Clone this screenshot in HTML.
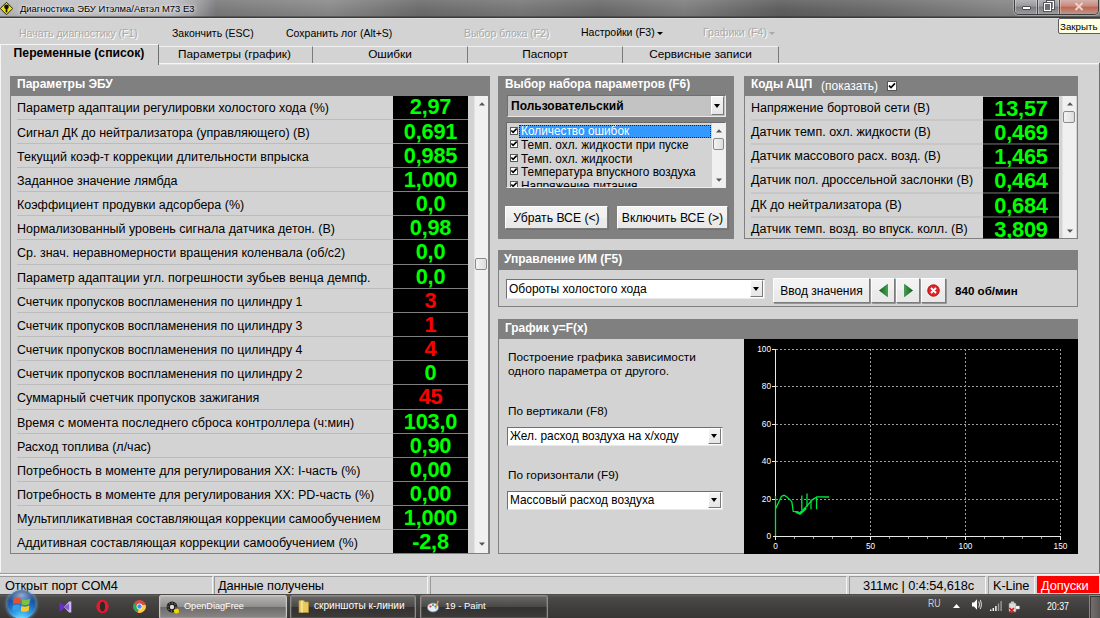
<!DOCTYPE html><html lang="ru"><head><meta charset="utf-8"><title>Диагностика ЭБУ Итэлма/Автэл M73 E3</title><style>*{box-sizing:border-box;margin:0;padding:0}
html,body{width:1100px;height:618px;overflow:hidden;background:#d3d3d3}
body{font-family:"Liberation Sans",sans-serif;color:#000}
#scr{position:absolute;left:0;top:0;width:1100px;height:618px;overflow:hidden;background:#d3d3d3}
.abs{position:absolute}
/* title bar */
#tb{position:absolute;left:0;top:0;width:1100px;height:18px;background:linear-gradient(90deg,#b6b6ba 0,#c4c4c8 60px,#bebec2 172px,#a0a0a3 196px,#7a7a7b 216px,#808080 260px,#8a8a8a 330px,#6c6c6c 420px,#787878 520px,#6a6a6a 600px,#7e7e7e 685px,#5e5e5e 780px,#6c6c6c 880px,#848484 1000px,#8a8a8a 1100px);border-bottom:1px solid #3c3c3c;box-shadow:inset 0 -1px 0 rgba(40,40,40,.45)}
#tb .shade{position:absolute;left:0;top:0;width:100%;height:16px;background:linear-gradient(180deg,rgba(255,255,255,.10),rgba(255,255,255,0) 60%,rgba(0,0,0,.06))}
#tb .ttl{position:absolute;left:20px;top:3px;font-size:9.42px;line-height:12px;color:#000;white-space:nowrap;text-shadow:0 0 5px rgba(255,255,255,.9),0 0 3px rgba(255,255,255,.8)}
#tbline{position:absolute;left:0;top:18px;width:1100px;height:1px;background:#dcdcdc}
/* menu */
.mi{position:absolute;top:27px;font-size:10.5px;line-height:12px;white-space:nowrap;color:#000}
.mi.dis{color:#a9a9a9;text-shadow:1px 1px 0 #fff}
.arr{display:inline-block;width:0;height:0;border-left:3px solid transparent;border-right:3px solid transparent;border-top:3px solid #000;vertical-align:middle;margin-left:2px}
.dis .arr{border-top-color:#a9a9a9}
/* tabs */
.tab{position:absolute;top:46px;height:17px;font-size:11.8px;line-height:14px;text-align:center;white-space:nowrap;border-right:1px solid #7a7a7a;border-top:1px solid #f0f0f0}
.tab.sel{top:44px;height:21px;font-weight:bold;font-size:12.2px;line-height:16px;border-right:1px solid #6e6e6e;border-top:1px solid #f4f4f4;border-left:1px solid #f4f4f4;background:#d3d3d3}
#tabline{position:absolute;left:159px;top:63px;width:940px;height:2px;background:linear-gradient(#f6f6f6 50%,#e0e0e0 50%)}
#tabR{position:absolute;left:1099px;top:63px;width:1px;height:510px;background:#6e6e6e}
#tabL{position:absolute;left:0;top:65px;width:1px;height:507px;background:#f6f6f6}
/* panels */
.panel{position:absolute;background:#d3d3d3;border:1px solid #808080}
.ph{position:absolute;left:-1px;top:-1px;right:-1px;height:21px;background:#808080;color:#fff;font-weight:bold;font-size:12px;line-height:18px;padding-left:7px;white-space:nowrap}
.rows{position:absolute;left:0;top:20px}
.row{position:relative;height:24px}
.row .lb{position:absolute;left:6px;top:0;bottom:0;line-height:24px;font-size:12.5px;white-space:nowrap;border-bottom:1px solid #bcbcbc}
.row .vl{position:absolute;top:0;bottom:0;background:#000;text-align:center;font-weight:bold;font-size:21.8px;letter-spacing:-.25px;line-height:24px;border-bottom:1px solid #808080;overflow:hidden}
.g{color:#00ff00}.r{color:#ff0000}
#pL{left:10px;top:76px;width:480px;height:478px;border-right-width:2px}
#pL .ph{height:20px;padding-left:7px;line-height:17px}
#pL .rows{top:19px}
#pL .lb{width:376px;padding-top:1px}
#pL .vl{left:382px;width:75px}
#pL .rows{width:477px;height:457px;overflow:hidden}
#pA{left:744px;top:76px;width:334px;height:163px}
#pA .lb{width:233px;line-height:23px}
#pA .vl{left:238px;width:76px}
#pA .rows{top:19px;height:142px;overflow:hidden;width:332px;transform:translateY(.5px)}
/* middle panel */
#pS{left:498px;top:76px;width:236px;height:163px;background:#808080}
.combo{position:absolute;background:#fff;border:1px solid #707070;border-right-color:#e8e8e8;border-bottom-color:#e8e8e8;font-size:12px;white-space:nowrap;overflow:hidden}
.combo .tx{position:absolute;left:3px;top:0}
.combo .dd{position:absolute;right:1px;top:0;bottom:1px;width:13px;background:linear-gradient(#f4f4f4,#e6e6e6);border:1px solid #7a7a7a;border-left-color:#fff;border-top-color:#fff}
.combo .dd:after{content:"";position:absolute;left:2px;top:50%;margin-top:-2px;border-left:3.5px solid transparent;border-right:3.5px solid transparent;border-top:4px solid #000}
.lbx{position:absolute;background:#d3d3d3;border:1px solid #6a6a6a;border-right-color:#eee;border-bottom-color:#eee;overflow:hidden}
.li{position:absolute;left:0;height:14px;font-size:11.85px;line-height:14px;white-space:nowrap}
.cb{display:inline-block;width:8px;height:8px;background:#fff;border:1px solid #5a5a5a;position:absolute}
.cb svg{position:absolute;left:-1px;top:-1px}
.btn{position:absolute;background:linear-gradient(#f3f3f3,#f0f0f0 50%,#ebebeb 50%,#e8e8e8);border:1px solid #fdfdfd;border-right-color:#7c7c7c;border-bottom-color:#7c7c7c;border-radius:1px;box-shadow:1px 1px 0 rgba(100,100,100,.55);font-size:12.2px;text-align:center;white-space:nowrap}
#pI{left:498px;top:250px;width:580px;height:57px}
#pG{left:498px;top:319px;width:579px;height:235px;border-right:none}
.t12{position:absolute;font-size:11.8px;line-height:14px;white-space:nowrap}
/* status */
#st{position:absolute;left:0;top:573px;width:1100px;height:21px;background:#d3d3d3;border-top:1px solid #9c9c9c;box-shadow:inset 0 1px 0 #f6f6f6,inset 0 2px 0 #e6e6e6}
#st .c{position:absolute;top:2px;height:18px;font-size:12.8px;line-height:18px;white-space:nowrap;border-left:1px solid #9a9a9a;border-top:1px solid #9a9a9a;border-right:1px solid #f6f6f6;padding-left:5px;letter-spacing:-.1px}
/* taskbar */
#tk{position:absolute;left:0;top:594px;width:1100px;height:24px;background:linear-gradient(180deg,#62605e 0,#4c4a48 2px,#413f3d 12px,#383634 24px);border-top:1px solid #4e4c4a}
.tbt{position:absolute;top:0;height:24px;border:1px solid #8d8b89;border-radius:2px;background:linear-gradient(#6a6866,#4a4846 50%,#343231 52%,#3d3b3a);color:#fff;font-size:9.6px;line-height:20px;white-space:nowrap;box-shadow:inset 0 0 0 1px rgba(255,255,255,.12)}
.tbt.act{background:linear-gradient(#b5b3b1,#908e8c 50%,#6e6c6a 52%,#8a8886);border-color:#c9c7c5}
.tbt span{position:absolute;left:24px;top:0}
.tray{position:absolute;color:#fff;font-size:9.5px;line-height:12px;white-space:nowrap}
</style></head><body><div id="scr">
<div id="tb"><div class="shade"></div>
<svg class="abs" style="left:0;top:2px" width="13" height="13" viewBox="0 0 14 14"><path d="M7 .3 L13.7 7 L7 13.7 L.3 7Z" fill="#f2e400" stroke="#111" stroke-width="1"/><circle cx="7" cy="5.2" r="2.5" fill="#111"/><rect x="6.1" y="6" width="1.8" height="5.2" fill="#111"/></svg>
<div class="ttl">Диагностика ЭБУ Итэлма/Автэл M73 E3</div>
<div class="abs" id="wbtn" style="left:1014px;top:0;width:85px;height:15px;border:1px solid #3e3e3e;border-top:none;border-radius:0 0 5px 5px;overflow:hidden;background:#8c8c8e;box-shadow:0 0 0 1px rgba(255,255,255,.28)">
 <div class="abs" style="left:0;top:0;width:23px;height:14px;background:linear-gradient(#b4b4b8,#98989c 45%,#7c7c80 50%,#9c9ca0);border-right:1px solid #4a4a4a;box-shadow:inset -1px 0 0 rgba(255,255,255,.35),inset 1px 0 0 rgba(255,255,255,.35)"><div class="abs" style="left:7px;top:6px;width:9px;height:4px;background:#fff;border:1px solid #4a4a52;border-radius:1px"></div></div>
 <div class="abs" style="left:23px;top:0;width:22px;height:14px;background:linear-gradient(#b4b4b8,#98989c 45%,#7c7c80 50%,#9c9ca0);border-right:1px solid #4a4a4a;box-shadow:inset -1px 0 0 rgba(255,255,255,.35),inset 1px 0 0 rgba(255,255,255,.35)"><div class="abs" style="left:9px;top:1px;width:7px;height:8px;border:1px solid #fff;outline:1px solid #55555c;background:#8a8a8e"></div><div class="abs" style="left:6px;top:3px;width:7px;height:8px;border:1.5px solid #fff;outline:1px solid #55555c;background:#6e6e74"></div></div>
 <div class="abs" style="left:45px;top:0;width:39px;height:14px;background:linear-gradient(#d4b0aa,#c98878 45%,#bd6552 50%,#c08878 85%,#b89890);box-shadow:inset 1px 0 0 rgba(255,255,255,.3)"><svg class="abs" style="left:14px;top:2px" width="10" height="9" viewBox="0 0 10 9"><path d="M1.5 1 L8.5 8 M8.5 1 L1.5 8" stroke="#ecd2cc" stroke-width="2"/></svg></div>
</div>
</div>
<div id="tbline"></div>
<div class="abs" style="left:1058px;top:18px;width:44px;height:16px;background:#ffffe1;border:1px solid #5e5e5e;border-radius:2px;font-size:9.75px;line-height:15px;padding-left:1px;z-index:5;white-space:nowrap">Закрыть</div>
<div class="mi dis" style="left:19px">Начать диагностику (F1)</div>
<div class="mi" style="left:172px">Закончить (ESC)</div>
<div class="mi" style="left:286px">Сохранить лог (Alt+S)</div>
<div class="mi dis" style="left:464px;top:26.5px">Выбор блока (F2)</div>
<div class="mi" style="left:581px;top:26px">Настройки (F3)<span class="arr"></span></div>
<div class="mi dis" style="left:703px;top:26px">Графики (F4)<span class="arr"></span></div>
<div class="tab sel" style="left:0;width:159px;padding-right:1px">Переменные (список)</div>
<div class="tab" style="left:159px;width:154px;padding-right:2px">Параметры (график)</div>
<div class="tab" style="left:313px;width:155px">Ошибки</div>
<div class="tab" style="left:468px;width:155px">Паспорт</div>
<div class="tab" style="left:623px;width:156px">Сервисные записи</div>
<div id="tabline"></div><div id="tabR"></div><div id="tabL"></div>

<div class="panel" id="pL"><div class="ph">Параметры ЭБУ</div><div class="rows">
<div class="row" style="position:absolute;left:0;top:-1px;height:25px"><span class="lb">Параметр адаптации регулировки холостого хода (%)</span><span class="vl g">2,97</span></div>
<div class="row" style="position:absolute;left:0;top:24px;height:24px"><span class="lb">Сигнал ДК до нейтрализатора (управляющего) (В)</span><span class="vl g">0,691</span></div>
<div class="row" style="position:absolute;left:0;top:48px;height:24px"><span class="lb">Текущий коэф-т коррекции длительности впрыска</span><span class="vl g">0,985</span></div>
<div class="row" style="position:absolute;left:0;top:72px;height:24px"><span class="lb">Заданное значение лямбда</span><span class="vl g">1,000</span></div>
<div class="row" style="position:absolute;left:0;top:96px;height:24px"><span class="lb">Коэффициент продувки адсорбера (%)</span><span class="vl g">0,0</span></div>
<div class="row" style="position:absolute;left:0;top:120px;height:24px"><span class="lb">Нормализованный уровень сигнала датчика детон. (В)</span><span class="vl g">0,98</span></div>
<div class="row" style="position:absolute;left:0;top:144px;height:25px"><span class="lb">Ср. знач. неравномерности вращения коленвала (об/с2)</span><span class="vl g">0,0</span></div>
<div class="row" style="position:absolute;left:0;top:169px;height:24px"><span class="lb">Параметр адаптации угл. погрешности зубьев венца демпф.</span><span class="vl g">0,0</span></div>
<div class="row" style="position:absolute;left:0;top:193px;height:24px"><span class="lb" style="font-size:12.3px">Счетчик пропусков воспламенения по цилиндру 1</span><span class="vl r">3</span></div>
<div class="row" style="position:absolute;left:0;top:217px;height:24px"><span class="lb" style="font-size:12.3px">Счетчик пропусков воспламенения по цилиндру 3</span><span class="vl r">1</span></div>
<div class="row" style="position:absolute;left:0;top:241px;height:24px"><span class="lb" style="font-size:12.3px">Счетчик пропусков воспламенения по цилиндру 4</span><span class="vl r">4</span></div>
<div class="row" style="position:absolute;left:0;top:265px;height:24px"><span class="lb" style="font-size:12.3px">Счетчик пропусков воспламенения по цилиндру 2</span><span class="vl g">0</span></div>
<div class="row" style="position:absolute;left:0;top:289px;height:25px"><span class="lb">Суммарный счетчик пропусков зажигания</span><span class="vl r">45</span></div>
<div class="row" style="position:absolute;left:0;top:314px;height:24px"><span class="lb">Время с момента последнего сброса контроллера (ч:мин)</span><span class="vl g">103,0</span></div>
<div class="row" style="position:absolute;left:0;top:338px;height:24px"><span class="lb">Расход топлива (л/час)</span><span class="vl g">0,90</span></div>
<div class="row" style="position:absolute;left:0;top:362px;height:24px"><span class="lb">Потребность в моменте для регулирования ХХ: I-часть (%)</span><span class="vl g">0,00</span></div>
<div class="row" style="position:absolute;left:0;top:386px;height:24px"><span class="lb">Потребность в моменте для регулирования ХХ: PD-часть (%)</span><span class="vl g">0,00</span></div>
<div class="row" style="position:absolute;left:0;top:410px;height:24px"><span class="lb">Мультипликативная составляющая коррекции самообучением</span><span class="vl g">1,000</span></div>
<div class="row" style="position:absolute;left:0;top:434px;height:24px"><span class="lb">Аддитивная составляющая коррекции самообучением (%)</span><span class="vl g">-2,8</span></div>
</div><div class="abs sb" style="left:463px;top:19px;width:14px;height:457px;background:#f0f0f0;border-left:1px solid #e3e3e3">
<svg class="abs" style="left:4px;top:6px" width="6" height="4" viewBox="0 0 6 4"><path d="M0 3.6 L3 0.2 L6 3.6Z" fill="#555"/></svg>
<div class="abs" style="left:0;top:162px;width:12px;height:12px;background:linear-gradient(90deg,#f4f4f4,#dcdcdc);border:1px solid #8a8a8a;border-radius:2px"></div>
<svg class="abs" style="left:4px;top:446px" width="6" height="4" viewBox="0 0 6 4"><path d="M0 .4 L3 3.8 L6 .4Z" fill="#555"/></svg>
</div>
</div>
<div class="panel" id="pS"><div class="ph" style="font-size:11.9px;line-height:16px">Выбор набора параметров (F6)</div>
<div class="combo" style="left:8px;top:18px;width:219px;height:22px;background:#c3c3c3;font-weight:bold;font-size:12px;line-height:20px"><span class="tx">Пользовательский</span><span class="dd"></span></div>
<div class="lbx" style="left:7px;top:45px;width:220px;height:66px">
 <div class="li" style="top:1px"><span class="cb" style="left:3px;top:3px"><svg viewBox="0 0 9 9" width="8" height="8"><path d="M1.5 4 L3.5 6 L7.5 1.8" fill="none" stroke="#000" stroke-width="1.8"/></svg></span><span class="abs" style="left:12px;top:1px;width:192px;height:13px;line-height:13px;background:#3399ff;color:#fff;outline:1px dotted #222;outline-offset:-1px;padding-left:2px">Количество ошибок</span></div>
 <div class="li" style="top:14px"><span class="cb" style="left:3px;top:3px"><svg viewBox="0 0 9 9" width="8" height="8"><path d="M1.5 4 L3.5 6 L7.5 1.8" fill="none" stroke="#000" stroke-width="1.8"/></svg></span><span class="abs" style="left:14px;top:1px">Темп. охл. жидкости при пуске</span></div>
 <div class="li" style="top:28px"><span class="cb" style="left:3px;top:3px"><svg viewBox="0 0 9 9" width="8" height="8"><path d="M1.5 4 L3.5 6 L7.5 1.8" fill="none" stroke="#000" stroke-width="1.8"/></svg></span><span class="abs" style="left:14px;top:1px">Темп. охл. жидкости</span></div>
 <div class="li" style="top:41px"><span class="cb" style="left:3px;top:3px"><svg viewBox="0 0 9 9" width="8" height="8"><path d="M1.5 4 L3.5 6 L7.5 1.8" fill="none" stroke="#000" stroke-width="1.8"/></svg></span><span class="abs" style="left:14px;top:1px">Температура впускного воздуха</span></div>
 <div class="li" style="top:55px"><span class="cb" style="left:3px;top:3px"><svg viewBox="0 0 9 9" width="8" height="8"><path d="M1.5 4 L3.5 6 L7.5 1.8" fill="none" stroke="#000" stroke-width="1.8"/></svg></span><span class="abs" style="left:14px;top:1px">Напряжение питания</span></div>
 <div class="abs" style="left:205px;top:0;width:13px;height:64px;background:#f0f0f0">
  <svg class="abs" style="left:4px;top:6px" width="6" height="4" viewBox="0 0 6 4"><path d="M0 3.6 L3 .2 L6 3.6Z" fill="#555"/></svg>
  <div class="abs" style="left:1px;top:15px;width:11px;height:12px;background:linear-gradient(90deg,#f4f4f4,#dcdcdc);border:1px solid #8a8a8a;border-radius:2px"></div>
  <svg class="abs" style="left:4px;top:55px" width="6" height="4" viewBox="0 0 6 4"><path d="M0 .4 L3 3.8 L6 .4Z" fill="#555"/></svg>
 </div>
</div>
<div class="btn" style="left:6px;top:129px;width:103px;height:23px;line-height:23px">Убрать ВСЕ (&lt;)</div>
<div class="btn" style="left:118px;top:129px;width:111px;height:23px;line-height:23px">Включить ВСЕ (&gt;)</div>
</div>

<div class="panel" id="pI"><div class="ph" style="height:20px;line-height:18px;font-size:12px;padding-left:6px">Управление ИМ (F5)</div>
<div class="combo" style="left:7px;top:28px;width:259px;height:20px;line-height:18px;font-size:12px"><span class="tx" style="left:2px">Обороты холостого хода</span><span class="dd"></span></div>
<div class="btn" style="left:274px;top:27px;width:97px;height:25px;line-height:24px;font-size:12px">Вво<u>д</u> значения</div>
<div class="btn" style="left:372px;top:27px;width:24px;height:25px"><svg class="abs" style="left:7px;top:5px" width="9" height="13" viewBox="0 0 9 13"><defs><linearGradient id="ga" x1="0" x2="1" y1="0" y2="0"><stop offset="0" stop-color="#14601f"/><stop offset="1" stop-color="#3fa34d"/></linearGradient></defs><path d="M8.6 .3 L.3 6.5 L8.6 12.7Z" fill="url(#ga)" stroke="#165f22" stroke-width=".5"/></svg></div>
<div class="btn" style="left:397px;top:27px;width:24px;height:25px"><svg class="abs" style="left:7px;top:5px" width="9" height="13" viewBox="0 0 9 13"><defs><linearGradient id="gb" x1="0" x2="1" y1="0" y2="0"><stop offset="0" stop-color="#3fa34d"/><stop offset="1" stop-color="#14601f"/></linearGradient></defs><path d="M.4 .3 L8.7 6.5 L.4 12.7Z" fill="url(#gb)" stroke="#165f22" stroke-width=".5"/></svg></div>
<div class="btn" style="left:422px;top:27px;width:25px;height:25px"><svg class="abs" style="left:5px;top:5px" width="13" height="13" viewBox="0 0 12 12"><circle cx="6" cy="6" r="5.6" fill="#e0262b"/><circle cx="6" cy="6" r="5.2" fill="none" stroke="#b8141a" stroke-width=".8"/><path d="M3.7 3.7 L8.3 8.3 M8.3 3.7 L3.7 8.3" stroke="#fff" stroke-width="1.7"/></svg></div>
<div class="t12" style="left:456px;top:32px;font-weight:bold;font-size:11.6px;line-height:15px">840 об/мин</div>
</div>

<div class="panel" id="pG"><div class="ph" style="height:20px;line-height:18px;font-size:11.9px;padding-left:7px">График y=F(x)</div>
<div class="t12" style="left:9px;top:30px">Построение графика зависимости</div>
<div class="t12" style="left:9px;top:44px">одного параметра от другого.</div>
<div class="t12" style="left:9px;top:84px">По вертикали (F8)</div>
<div class="combo" style="left:8px;top:107px;width:216px;height:19px;line-height:17px;font-size:11.85px"><span class="tx" style="left:2px">Жел. расход воздуха на х/ходу</span><span class="dd"></span></div>
<div class="t12" style="left:9px;top:148px">По горизонтали (F9)</div>
<div class="combo" style="left:8px;top:171px;width:216px;height:19px;line-height:17px;font-size:11.85px"><span class="tx" style="left:2px">Массовый расход воздуха</span><span class="dd"></span></div>
<svg class="abs" style="left:245px;top:19px" width="334" height="215" viewBox="744 339 334 215" font-family="Liberation Sans, sans-serif" font-size="9.2" fill="#fff">
<rect x="744" y="339" width="334" height="215" fill="#000"/>
<g stroke="#9c9c9c" stroke-width="1" stroke-dasharray="2 2" fill="none">
<path d="M776 349.5H1060M776 386.5H1060M776 424.5H1060M776 461.5H1060M776 499.5H1060"/>
<path d="M870.5 349V536M965.5 349V536M1060.5 349V536"/>
</g>
<g stroke="#e8e8e8" stroke-width="1" fill="none">
<path d="M775.5 349V537M773 536.5H1061"/>
<path d="M772 349.5H776M772 386.5H776M772 424.5H776M772 461.5H776M772 499.5H776"/>
<path d="M775.5 536V540M870.5 536V540M965.5 536V540M1060.5 536V540"/>
</g>
<g stroke="#9a9a9a" stroke-width="1" fill="none"><path d="M794.5 537V539M813.5 537V539M832.5 537V539M851.5 537V539M889.5 537V539M908.5 537V539M927.5 537V539M946.5 537V539M984.5 537V539M1003.5 537V539M1022.5 537V539M1041.5 537V539"/></g>
<g text-anchor="end"><text transform="translate(771 352) scale(.9 1)">100</text><text transform="translate(771 389) scale(.9 1)">80</text><text transform="translate(771 427) scale(.9 1)">60</text><text transform="translate(771 464) scale(.9 1)">40</text><text transform="translate(771 502) scale(.9 1)">20</text><text transform="translate(771 539) scale(.9 1)">0</text></g>
<g text-anchor="middle"><text transform="translate(775.5 549.3) scale(.9 1)">0</text><text transform="translate(870.5 549.3) scale(.9 1)">50</text><text transform="translate(965.5 549.3) scale(.9 1)">100</text><text transform="translate(1060.5 549.3) scale(.9 1)">150</text></g>
<g stroke="#00e640" stroke-width="1.3" fill="none" stroke-linejoin="round">
<path d="M775.5 536 V496 M775.5 509 L781.5 496.3 L784.2 495.2 L787 497 L791.8 501.6 L793.2 511.3 L798 512 L799.4 513.8 L802.8 510.6 L812.4 499.6 L817.2 496.8 L829 497"/>
<path d="M801.8 495.5V510M807 493.4V507M811 499.6V509.2M816.6 496.8V509.2"/>
<path d="M796 512 L800 513.5 L806 508" stroke-width="2.4"/>
</g>
</svg>
</div>

<div class="panel" id="pA"><div class="ph" style="height:20px;line-height:17px;font-size:11.9px">Коды АЦП<span class="abs" style="left:77px;top:2px;font-weight:normal;font-size:12px">(показать)</span><span class="abs" style="left:143px;top:5px;width:10px;height:10px;background:#fff;border:1px solid #555"><svg class="abs" style="left:0;top:0" viewBox="0 0 8 8" width="8" height="8"><path d="M1 3.6 L3 5.6 L7 1.4" fill="none" stroke="#000" stroke-width="1.7"/></svg></span></div><div class="rows">
<div class="row" style="position:absolute;left:0;top:0px;height:24px"><span class="lb">Напряжение бортовой сети (В)</span><span class="vl g">13,57</span></div>
<div class="row" style="position:absolute;left:0;top:24px;height:24px"><span class="lb">Датчик темп. охл. жидкости (В)</span><span class="vl g">0,469</span></div>
<div class="row" style="position:absolute;left:0;top:48px;height:24px"><span class="lb">Датчик массового расх. возд. (В)</span><span class="vl g">1,465</span></div>
<div class="row" style="position:absolute;left:0;top:72px;height:25px"><span class="lb">Датчик пол. дроссельной заслонки (В)</span><span class="vl g">0,464</span></div>
<div class="row" style="position:absolute;left:0;top:97px;height:24px"><span class="lb">ДК до нейтрализатора (В)</span><span class="vl g">0,684</span></div>
<div class="row" style="position:absolute;left:0;top:121px;height:24px"><span class="lb">Датчик темп. возд. во впуск. колл. (В)</span><span class="vl g">3,809</span></div>
</div><div class="abs sb" style="left:317px;top:19px;width:14px;height:142px;background:#f0f0f0;border-left:1px solid #e3e3e3">
<svg class="abs" style="left:4px;top:6px" width="6" height="4" viewBox="0 0 6 4"><path d="M0 3.6 L3 .2 L6 3.6Z" fill="#555"/></svg>
<div class="abs" style="left:0;top:15px;width:12px;height:12px;background:linear-gradient(90deg,#f4f4f4,#dcdcdc);border:1px solid #8a8a8a;border-radius:2px"></div>
<svg class="abs" style="left:4px;top:133px" width="6" height="4" viewBox="0 0 6 4"><path d="M0 .4 L3 3.8 L6 .4Z" fill="#555"/></svg>
</div>
</div>
<div id="st">
<div class="c" style="left:0;width:213px;border-left:none">Открыт порт COM4</div>
<div class="c" style="left:214px;width:214px;padding-left:3px">Данные получены</div>
<div class="c" style="left:430px;width:417px"></div>
<div class="c" style="left:849px;width:137px;padding-left:13px">311мс | 0:4:54,618с</div>
<div class="c" style="left:988px;width:47px;padding-left:4px">K-Line</div>
<div class="c" style="left:1037px;width:62px;background:#ff0000;color:#fff;border:none;top:2px;height:17px;line-height:19px;padding-left:4px">Допуски</div>
</div>
<div id="tk">
<div class="abs" id="orb" style="left:7px;top:-5px;width:29px;height:29px;border-radius:50%;background:radial-gradient(ellipse 70% 45% at 50% 18%,rgba(255,255,255,.55),rgba(255,255,255,0) 70%),radial-gradient(circle at 50% 105%,#7fe6ff 0,#35a6ea 28%,#1c66bd 55%,#123f86 80%,#0b2a5e 100%);box-shadow:0 0 3px 1px rgba(120,190,245,.6),inset 0 0 2px rgba(255,255,255,.5)">
<svg class="abs" style="left:5px;top:5px" width="19" height="17" viewBox="0 0 15 14"><path d="M1 3 Q4 1.5 7 3 L6.5 7.5 Q3.5 6 .5 7.5Z" fill="#e8512a"/><path d="M8 3.2 Q11 4.8 14.5 3 L14 7.5 Q11 9.2 7.5 7.6Z" fill="#7cc142"/><path d="M.4 8.6 Q3.4 7 6.4 8.6 L5.9 13 Q3 11.5 0 13Z" fill="#3a9ce0"/><path d="M7.4 8.8 Q10.6 10.4 13.9 8.7 L13.4 13 Q10.4 14.7 6.9 13.1Z" fill="#f7c827"/></svg></div>
<svg class="abs" style="left:59px;top:6px" width="13" height="12" viewBox="0 0 13 12"><path d="M.5 1.2 L7 6 L.5 10.8Z" fill="#6a2ed0"/><path d="M12.3 .6 V11.4 L10 11.4 L5 6 L10 .6Z" fill="#cbb4f2"/><path d="M5 6 L10 2.6 V9.4Z" fill="#8a58dc"/></svg>
<svg class="abs" style="left:95px;top:4px" width="15" height="15" viewBox="0 0 15 16"><ellipse cx="7.5" cy="8" rx="6.5" ry="7.3" fill="#e8192c"/><ellipse cx="7.5" cy="8" rx="2.7" ry="5.2" fill="#2b2a29"/></svg>
<svg class="abs" style="left:133px;top:5px" width="13" height="13" viewBox="0 0 14 14"><circle cx="7" cy="7" r="6.8" fill="#dd4b3e"/><path d="M7 7 L1.2 3.5 A6.8 6.8 0 0 0 5 13.5Z" fill="#2da94f"/><path d="M7 7 L5 13.5 A6.8 6.8 0 0 0 13.6 5.2 L7 5.2Z" fill="#fdd03b"/><path d="M7 7 L1.2 3.5 A6.8 6.8 0 0 1 13.6 5.2 L7 5.2Z" fill="#dd4b3e"/><circle cx="7" cy="7" r="3.1" fill="#fff"/><circle cx="7" cy="7" r="2.4" fill="#4a8af4"/></svg>
<div class="tbt act" style="left:159px;width:128px"><svg class="abs" style="left:6px;top:5px" width="14" height="13" viewBox="0 0 14 13"><circle cx="6" cy="6" r="5.4" fill="#1a1a1a"/><circle cx="6" cy="6" r="2.2" fill="#ddd"/><circle cx="6" cy="6" r="4" fill="none" stroke="#bbb" stroke-width=".8" stroke-dasharray="1.5 1.5"/><circle cx="10.5" cy="10" r="2.5" fill="#f2d400"/></svg><span style="font-size:9.15px">OpenDiagFree</span></div>
<div class="tbt" style="left:290px;width:126px"><svg class="abs" style="left:7px;top:4px" width="11" height="13" viewBox="0 0 11 13"><path d="M1 .5 H6 L7 2 H10.5 V12.5 H1Z" fill="#e8c860" stroke="#b8922e" stroke-width=".7"/><path d="M4 .5V12.5" stroke="#f7e7a0" stroke-width="1.5"/></svg><span style="font-size:10.1px;left:23px">скриншоты к-линии</span></div>
<div class="tbt" style="left:420px;width:128px"><svg class="abs" style="left:6px;top:4px" width="14" height="13" viewBox="0 0 14 13"><ellipse cx="6" cy="7.5" rx="5.6" ry="4.6" fill="#e9eef6" stroke="#5a7bb0" stroke-width=".8"/><circle cx="3.5" cy="6.5" r="1.1" fill="#d33"/><circle cx="6" cy="5" r="1.1" fill="#3a3"/><circle cx="8.5" cy="6.5" r="1.1" fill="#36c"/><path d="M10.5 .5 L12 1 L9 9 L8 8.5Z" fill="#e89a2a"/></svg><span style="font-size:9.5px">19 - Paint</span></div>
<div class="tray" style="left:928px;top:3px;color:#cfcfcf;font-size:10.4px;transform:scaleX(.84);transform-origin:0 0">RU</div>
<svg class="abs" style="left:953px;top:9px" width="7" height="4" viewBox="0 0 7 4"><path d="M0 4 L3.5 0 L7 4Z" fill="#fff"/></svg>
<svg class="abs" style="left:971px;top:3px" width="12" height="13" viewBox="0 0 12 12" preserveAspectRatio="none"><path d="M1 4.2 H3 L6 1.2 V10.8 L3 7.8 H1Z" fill="#fff"/><path d="M7.6 3.2 Q9.3 6 7.6 8.8 M9.2 1.8 Q11.6 6 9.2 10.2" stroke="#ddd" stroke-width="1" fill="none"/></svg>
<svg class="abs" style="left:989px;top:5px" width="14" height="11" viewBox="0 0 14 11"><path d="M1 9.5H2.4V11H1Z M3.6 8H5V11H3.6Z M6.2 6H7.6V11H6.2Z" fill="#fff"/><path d="M8.8 3.5H10.2V11H8.8Z M11.4 1H12.8V11H11.4Z" fill="#9a9a9a"/></svg>
<svg class="abs" style="left:1007px;top:5px" width="14" height="14" viewBox="0 0 14 14"><rect x="2" y="3" width="7" height="9" rx="1" fill="#ddd" stroke="#888" stroke-width=".6"/><rect x="4" y="1.5" width="3" height="1.8" fill="#ccc"/><path d="M9 6 H12.5 V9 H9" fill="#fff" stroke="#aaa" stroke-width=".5"/><path d="M2.5 8 L7 12.5 M7 8 L2.5 12.5" stroke="#e01010" stroke-width="1.6"/></svg>
<div class="tray" style="left:1047px;top:6px;font-size:10.2px;transform:scaleX(.86);transform-origin:0 0">20:37</div>
<div class="abs" style="left:1089px;top:0px;width:11px;height:24px;border:1px solid #8a8886;border-right:none;background:linear-gradient(90deg,#74716f,#5a5755);box-shadow:inset 1px 1px 0 #3a3837"></div>
</div>

</div></body></html>
